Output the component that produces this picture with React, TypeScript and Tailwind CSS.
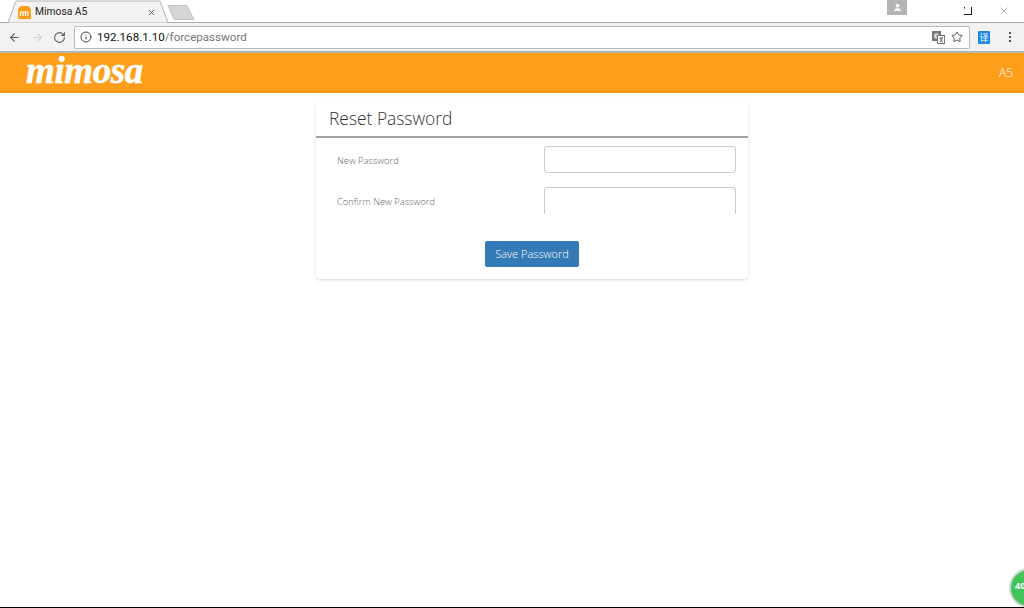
import React from 'react';
import { ArrowLeft, ArrowRight, RotateCw, Info, Star, X, User } from 'lucide-react';

const Field: React.FC<{ label: string; clipped?: boolean }> = ({ label, clipped }) => (
  <div className="flex h-[27px] items-center justify-between pl-[21px] pr-[12px]">
    <label className="pt-[3px] text-[9.4px] font-light text-[#666]">{label}</label>
    <div
      className={
        clipped
          ? 'h-[27px] w-[192px] rounded-t-[3px] border border-b-0 border-[#ccc]'
          : 'h-[27px] w-[192px] rounded-[3px] border border-[#ccc]'
      }
    />
  </div>
);

const TabStrip = () => (
  <div className="relative flex h-[23px] items-start justify-between border-b border-[#b0b0b0] bg-white">
    <div className="flex items-start">
      {/* tab outline */}
      <div className="relative ml-[6px] h-[23px] w-[160px]">
        <svg className="absolute inset-0" width="164" height="23" viewBox="0 0 164 23">
          <path d="M0 22.5 L2 22.5 L10 1 L154 1 L162 22.5" fill="#f2f2f2" stroke="#b4b4b4" />
        </svg>
        <div className="absolute left-[12px] top-[5px] flex w-[140px] items-center">
          <svg width="13" height="13" viewBox="0 0 13 13">
            <path d="M0 13 V5 Q0 0 5 0 H8 Q13 0 13 5 V13 Z" fill="#ff9e1b" />
            <path d="M2.5 10 V6 H5 V10 M5 6 H7.5 V10 M7.5 6 H10 V10" stroke="white" strokeWidth="1.2" fill="none" />
          </svg>
          <span className="ml-[4px] font-['Roboto',sans-serif] text-[10.3px] leading-[14px] text-[#222]">Mimosa A5</span>
          <X className="ml-auto mr-[2px] text-[#444]" size={9} strokeWidth={2} />
        </div>
      </div>
      <svg className="ml-[1px] mt-[5px]" width="28" height="15" viewBox="0 0 28 15">
        <path d="M1 .5 L20 .5 L27 14.5 L7 14.5 Z" fill="#d5d5d5" stroke="#c4c4c4" />
      </svg>
    </div>
    <div className="flex items-start">
      <div className="mr-[57px] flex h-[15px] w-[20px] items-center justify-center bg-[#b3b3b3]">
        <User className="text-white" size={9} fill="white" />
      </div>
      <svg className="mr-[25px] mt-[7px]" width="9" height="8" viewBox="0 0 9 8">
        <path d="M.5 0 V1.5 M0 7.5 H8 M7.5 0 V7.5" stroke="#222" fill="none" />
      </svg>
      <X className="mr-[14px] mt-[5px] text-[#777]" size={12} strokeWidth={1} />
    </div>
  </div>
);

const Toolbar = () => (
  <div className="flex h-[30px] items-center border-b-2 border-[#b4b4b4] bg-[#f2f2f2]">
    <ArrowLeft className="ml-[8px] text-[#5f5f5f]" size={13} strokeWidth={2} />
    <ArrowRight className="ml-[10px] text-[#cfcfcf]" size={13} strokeWidth={2} />
    <RotateCw className="ml-[9px] text-[#5f5f5f]" size={13} strokeWidth={2} />
    <div className="ml-[8px] flex h-[23px] w-[896px] items-center rounded-[2px] border border-[#b9b9b9] bg-white">
      <Info className="ml-[5px] text-[#444]" size={12} strokeWidth={2} />
      <span className="ml-[5px] pt-[1px] font-['Roboto',sans-serif] text-[11.6px] text-[#111]">
        192.168.1.10<span className="text-[#777]">/forcepassword</span>
      </span>
      <svg className="ml-auto" width="13" height="13" viewBox="0 0 13 13">
        <rect x="0" y="0" width="9" height="10" fill="#777" />
        <path d="M2.5 5 H6 M3 3 H6 V7 H3 Z" stroke="white" fill="none" />
        <rect x="5.5" y="4.5" width="7" height="8" fill="white" stroke="#777" />
        <path d="M7.5 7 H11 M8 7 L10.5 11 M10.5 7 L8 11" stroke="#666" fill="none" />
      </svg>
      <Star className="ml-[6px] mr-[6px] text-[#555]" size={12} strokeWidth={2} />
    </div>
    <div className="ml-[8px] flex h-[13px] w-[12px] items-center justify-center rounded-[1px] bg-[#1e88e5] font-['Noto_Sans_CJK_SC',sans-serif] text-[9px] leading-none text-white">
      译
    </div>
    <div className="ml-[19px] flex flex-col gap-[2px]">
      <span className="h-[2px] w-[2px] bg-[#555]" />
      <span className="h-[2px] w-[2px] bg-[#555]" />
      <span className="h-[2px] w-[2px] bg-[#555]" />
    </div>
  </div>
);

export default function App() {
  return (
    <div className="relative flex h-[608px] w-[1024px] flex-col overflow-hidden border-b border-black bg-white font-['Open_Sans',sans-serif]">
      <TabStrip />
      <Toolbar />

      <header className="flex h-[40px] items-center justify-between bg-[#ff9e1b] pl-[26px] pr-[11px] text-white">
        <span className="pb-[6px] font-['Liberation_Serif',serif] text-[37px] font-bold italic leading-none tracking-[-0.4px] [-webkit-text-stroke:0.5px_white]">
          mimosa
        </span>
        <span className="text-[12px] font-light">A5</span>
      </header>

      <main className="pl-[316px] pt-[8px]">
        <div className="h-[178px] w-[432px] rounded-[4px] bg-white shadow-[0_1px_3px_rgba(0,0,0,0.15)]">
          <div className="flex h-[37px] items-center border-b-2 border-[#a3a3a3] px-[13px]">
            <h1 className="text-[17.4px] font-light text-[#333]">Reset Password</h1>
          </div>
          <div className="flex flex-col gap-[14px] pt-[8px]">
            <Field label="New Password" />
            <Field label="Confirm New Password" clipped />
          </div>
          <div className="flex justify-center pt-[27px]">
            <button className="h-[26px] w-[94px] rounded-[2px] bg-[#337ab7] text-[11px] font-light text-white">
              Save Password
            </button>
          </div>
        </div>
      </main>

      <div className="absolute left-[1009px] top-[568px] flex h-[40px] w-[40px] items-center rounded-full border-2 border-[#cfd8cf] bg-[#43c45a] pb-[4px] pl-[4px] text-[9px] font-bold text-white">
        40
      </div>
    </div>
  );
}
